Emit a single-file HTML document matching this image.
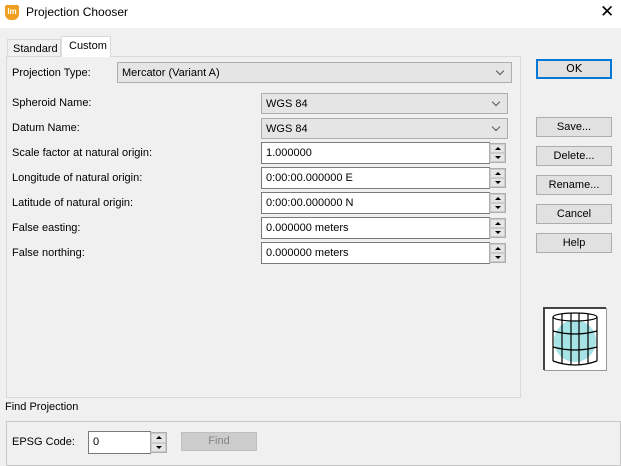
<!DOCTYPE html>
<html><head><style>
body{margin:0;width:621px;height:460px;background:#f0f0f0;font-family:"Liberation Sans",sans-serif;font-size:11px;color:#000;position:relative;overflow:hidden}
.a{position:absolute;white-space:nowrap}
.sel{position:absolute;background:#e5e5e5;border:1px solid #adadad;box-sizing:border-box;padding:4px 0 0 4px}
.sel:after{content:"";position:absolute;right:8px;top:5px;width:5px;height:5px;border-right:1px solid #555;border-bottom:1px solid #555;transform:rotate(45deg)}
.inp{position:absolute;background:#fff;border:1px solid #7a7a7a;box-sizing:border-box;padding:4px 0 0 4px}
.sp{position:absolute;width:17px;border:1px solid #adadad;box-sizing:border-box;background:#f0f0f0}
.sp i{display:block;height:50%;box-sizing:border-box;border:1px solid #ccc;background:#e5e5e5;position:relative}
.sp i:after{content:"";position:absolute;left:4px;top:2px;border-left:3px solid transparent;border-right:3px solid transparent}
.sp i.u:after{border-bottom:3px solid #000}
.sp i.d:after{border-top:3px solid #000}
.btn{position:absolute;left:536px;width:76px;height:20px;box-sizing:border-box;border:1px solid #adadad;background:#e1e1e1;text-align:center;line-height:18px}
</style></head><body>
<div class="a" style="left:0;top:0;width:621px;height:28px;background:#fff"></div>
<div class="a" style="left:5px;top:5px;width:14px;height:15px;background:#f0a020;border-radius:2px 2px 6px 6px;color:#fff;font-size:8px;font-weight:bold;text-align:center;line-height:14px">lm</div>
<div class="a" style="left:26px;top:5px;font-size:12px">Projection Chooser</div>
<div class="a" style="left:600px;top:2px;font-size:17px">✕</div>

<div class="a" style="left:6px;top:56px;width:515px;height:342px;border:1px solid #d9d9d9;box-sizing:border-box"></div>
<div class="a" style="left:7px;top:39px;width:54px;height:17px;border:1px solid #d9d9d9;border-bottom:none;box-sizing:border-box;padding:3px 0 0 5px">Standard</div>
<div class="a" style="left:61px;top:36px;width:50px;height:21px;border:1px solid #d9d9d9;border-bottom:none;background:#fff;box-sizing:border-box;padding:3px 0 0 7px">Custom</div>
<div class="a" style="left:7px;top:57px;width:513px;height:340px;background:#f0f0f0"></div>

<div class="a" style="left:12px;top:67px">Projection Type:</div>
<div class="sel" style="left:117px;top:62px;width:395px;height:21px">Mercator (Variant A)</div>
<div class="a" style="left:12px;top:97px">Spheroid Name:</div>
<div class="sel" style="left:261px;top:93px;width:247px;height:21px">WGS 84</div>
<div class="a" style="left:12px;top:122px">Datum Name:</div>
<div class="sel" style="left:261px;top:118px;width:247px;height:21px">WGS 84</div>

<div class="a" style="left:12px;top:147px">Scale factor at natural origin:</div>
<div class="inp" style="left:261px;top:142px;width:229px;height:22px">1.000000</div>
<div class="sp" style="left:489px;top:143px;height:20px"><i class="u"></i><i class="d"></i></div>
<div class="a" style="left:12px;top:172px">Longitude of natural origin:</div>
<div class="inp" style="left:261px;top:167px;width:229px;height:22px">0:00:00.000000 E</div>
<div class="sp" style="left:489px;top:168px;height:20px"><i class="u"></i><i class="d"></i></div>
<div class="a" style="left:12px;top:197px">Latitude of natural origin:</div>
<div class="inp" style="left:261px;top:192px;width:229px;height:22px">0:00:00.000000 N</div>
<div class="sp" style="left:489px;top:193px;height:20px"><i class="u"></i><i class="d"></i></div>
<div class="a" style="left:12px;top:222px">False easting:</div>
<div class="inp" style="left:261px;top:217px;width:229px;height:22px">0.000000 meters</div>
<div class="sp" style="left:489px;top:218px;height:20px"><i class="u"></i><i class="d"></i></div>
<div class="a" style="left:12px;top:247px">False northing:</div>
<div class="inp" style="left:261px;top:242px;width:229px;height:22px">0.000000 meters</div>
<div class="sp" style="left:489px;top:243px;height:20px"><i class="u"></i><i class="d"></i></div>

<div class="btn" style="top:59px;border:2px solid #0078d7;line-height:16px;font-family:'DejaVu Sans',sans-serif;font-size:11px">OK</div>
<div class="btn" style="top:117px">Save...</div>
<div class="btn" style="top:146px">Delete...</div>
<div class="btn" style="top:175px">Rename...</div>
<div class="btn" style="top:204px">Cancel</div>
<div class="btn" style="top:233px">Help</div>

<svg class="a" style="left:543px;top:307px" width="64" height="64" viewBox="0 0 64 64">
<rect x="0" y="0" width="64" height="64" fill="#fff"/>
<path d="M1 63V1H63" fill="none" stroke="#444" stroke-width="2"/>
<path d="M63.5 1V63.5H1" fill="none" stroke="#999" stroke-width="1"/>
<circle cx="32" cy="34" r="21" fill="#a6e3e6"/>
<g fill="none" stroke="#000" stroke-width="1.2">
<ellipse cx="32" cy="10" rx="22" ry="4"/>
<path d="M10 54Q32 62 54 54"/>
<path d="M10 10V54M54 10V54M19 7V57M45 7V57M28 6V58M36 6V58"/>
<path d="M10 24Q32 30 54 24M10 40Q32 46 54 40"/>
</g></svg>

<div class="a" style="left:5px;top:401px">Find Projection</div>
<div class="a" style="left:6px;top:421px;width:615px;height:45px;border:1px solid #c8c8c8;box-sizing:border-box"></div>
<div class="a" style="left:12px;top:436px">EPSG Code:</div>
<div class="inp" style="left:88px;top:431px;width:63px;height:23px">0</div>
<div class="sp" style="left:150px;top:432px;height:21px"><i class="u"></i><i class="d"></i></div>
<div class="a" style="left:181px;top:432px;width:76px;height:19px;background:#cccccc;border:1px solid #bfbfbf;box-sizing:border-box;text-align:center;line-height:17px;color:#838383">Find</div>
</body></html>
